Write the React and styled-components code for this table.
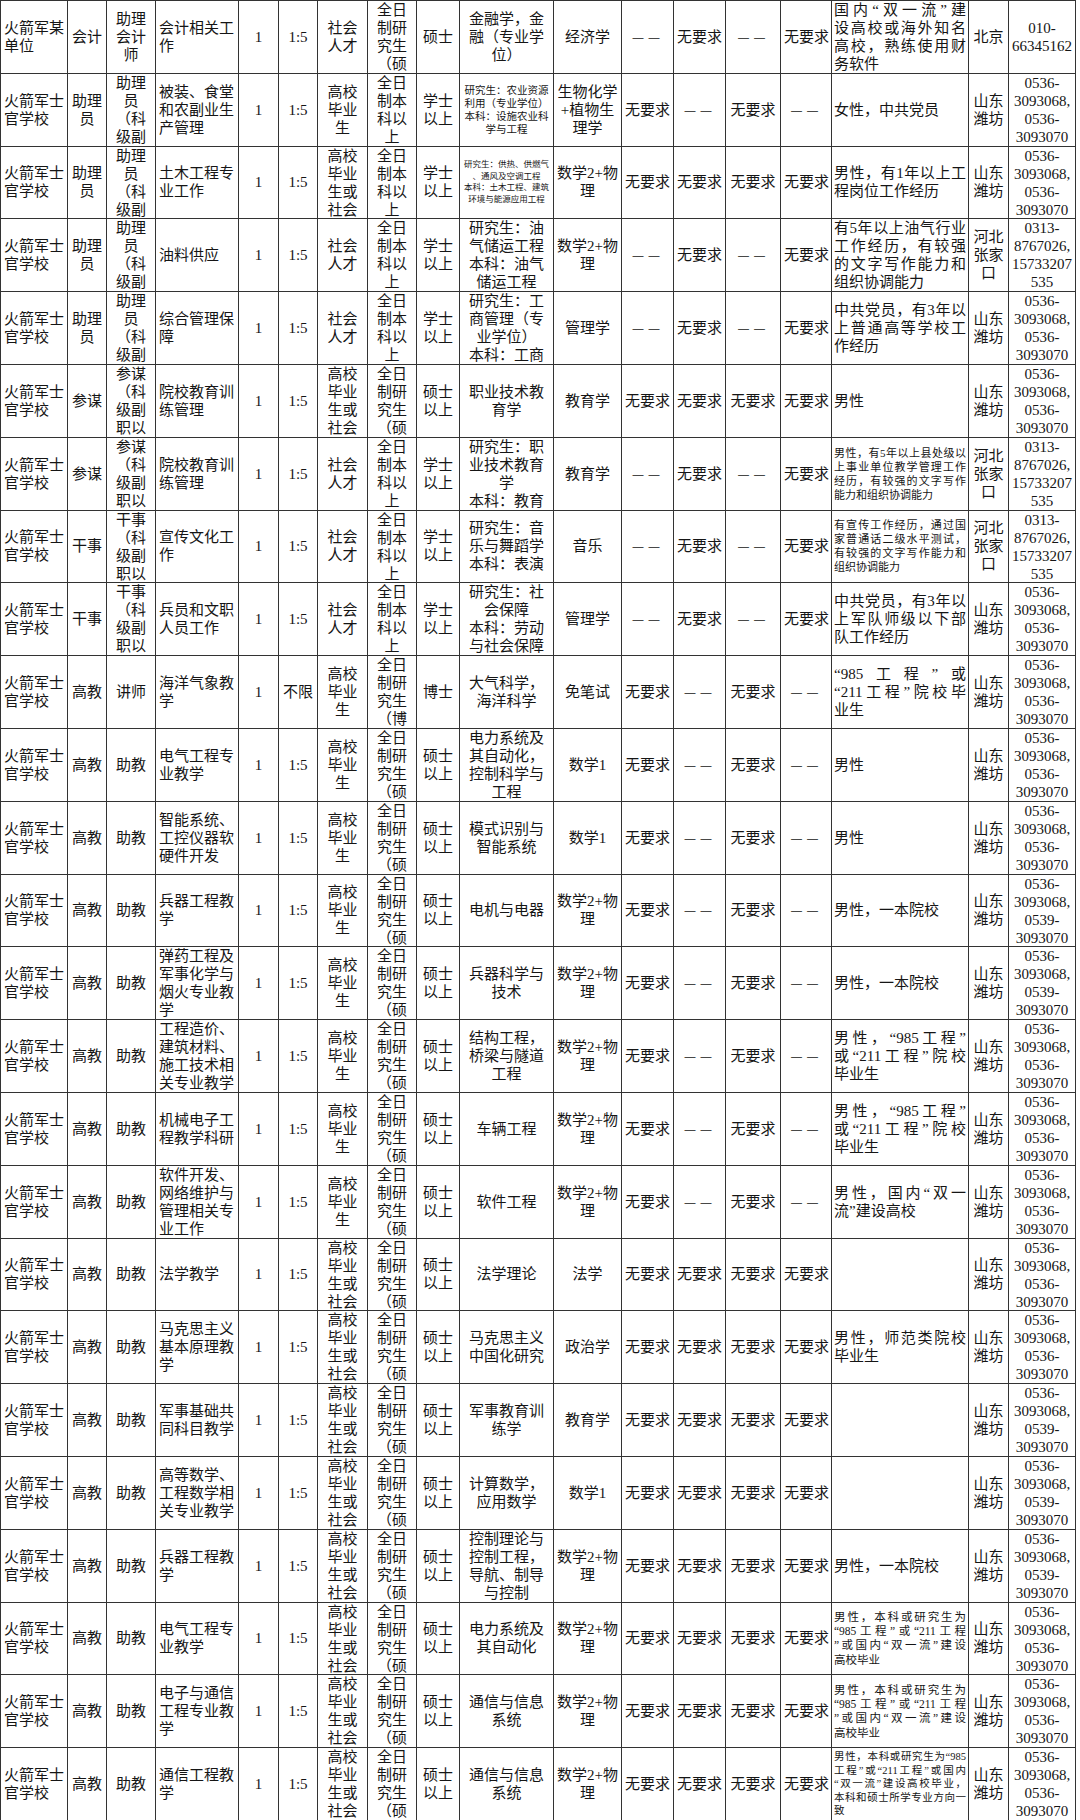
import styled, { createGlobalStyle } from "styled-components";

const GlobalStyle = createGlobalStyle`
  html, body {
    margin: 0;
    padding: 0;
    background: #ffffff;
  }
  body {
    font-family: "Liberation Serif", "Noto Sans CJK SC", serif;
    color: #151515;
  }
`;

const ROW_H = 72.8;

// column widths and alignment, read off the screenshot
const COLS = [
  { w: 67, a: "left" },
  { w: 39, a: "center" },
  { w: 49, a: "center" },
  { w: 83, a: "left" },
  { w: 40, a: "center" },
  { w: 39, a: "center" },
  { w: 50, a: "center" },
  { w: 49, a: "center" },
  { w: 43, a: "center" },
  { w: 94, a: "center" },
  { w: 68, a: "center" },
  { w: 52, a: "center" },
  { w: 52, a: "center" },
  { w: 55, a: "center" },
  { w: 51, a: "center" },
  { w: 137, a: "left", j: true },
  { w: 40, a: "center" },
  { w: 67, a: "center" },
];

const Sheet = styled.div`
  display: grid;
  grid-template-columns: ${COLS.map((c) => c.w + "px").join(" ")};
  grid-auto-rows: ${ROW_H}px;
  width: max-content;
  border-left: 1px solid #333;
  border-top: 1px solid #333;
`;

const Cell = styled.div`
  box-sizing: border-box;
  border-right: 1px solid #333;
  border-bottom: 1px solid #333;
  padding: 0 ${(p) => p.$pad}px;
  display: flex;
  flex-direction: column;
  justify-content: safe center;
  overflow: hidden;
  white-space: nowrap;
  text-align: ${(p) => p.$align};
  font-size: ${(p) => p.$fs}px;
  line-height: ${(p) => p.$lh}px;
  ${(p) =>
    p.$dash &&
    `
    font-family: "Liberation Sans", sans-serif;
    font-size: 11px;
    letter-spacing: 5px;
    padding-left: 5px;
  `}
`;

const Line = styled.div`
  flex-shrink: 0;
  text-align-last: ${(p) => (p.$justify ? "justify" : "auto")};
  text-justify: inter-character;
`;

const S = "火箭军士\n官学校";
const WF = "山东\n潍坊";
const HB = "河北\n张家\n口";
const G6 = "0536-\n3093068,\n0536-\n3093070";
const G9 = "0536-\n3093068,\n0539-\n3093070";
const ZJK = "0313-\n8767026,\n15733207\n535";
const N = "无要求";
const D = "——";
const YJS = "全日\n制研\n究生\n（硕\n士）";
const BK = "全日\n制本\n科以\n上";
const GX = "高校\n毕业\n生";
const GXS = "高校\n毕业\n生或\n社会\n人才";
const SH = "社会\n人才";
const SS = "硕士\n以上";
const XS = "学士\n以上";
const ZLY = "助理\n员\n（科\n级副\n职以\n下）";
const M2 = "数学2+物\n理";
const REQ_A = [N, D, N, D];
const REQ_N = [N, N, N, N];

const small = (t, fs, lh) => ({ t, fs, lh });

const E985 = small("男性，本科或研究生为\n“985工程”或“211工程\n”或国内“双一流”建设\n高校毕业", 11.5, 14.3);

const teach = (c4, c7, c10, c11, req, c16, c18) => [
  S, "高教", "助教", c4, "1", "1:5", c7, YJS, SS, c10, c11, ...req, c16, WF, c18,
];

const ROWS = [
  ["火箭军某\n单位", "会计", "助理\n会计\n师", "会计相关工\n作", "1", "1:5", SH, YJS, "硕士",
    "金融学，金\n融（专业学\n位）", "经济学", D, N, D, N,
    "国内“双一流”建\n设高校或海外知名\n高校，熟练使用财\n务软件", "北京", "010-\n66345162"],
  [S, "助理\n员", ZLY, "被装、食堂\n和农副业生\n产管理", "1", "1:5", GX, BK, XS,
    small("研究生：农业资源\n利用（专业学位）\n本科：设施农业科\n学与工程", 10.5, 13),
    "生物化学\n+植物生\n理学", N, D, N, D, "女性，中共党员", WF, G6],
  [S, "助理\n员", ZLY, "土木工程专\n业工作", "1", "1:5", GXS, BK, XS,
    small("研究生：供热、供燃气\n、通风及空调工程\n本科：土木工程、建筑\n环境与能源应用工程", 8.5, 11.7),
    M2, N, N, N, N, "男性，有1年以上工\n程岗位工作经历", WF, G6],
  [S, "助理\n员", ZLY, "油料供应", "1", "1:5", SH, BK, XS,
    "研究生：油\n气储运工程\n本科：油气\n储运工程", M2, D, N, D, N,
    "有5年以上油气行业\n工作经历，有较强\n的文字写作能力和\n组织协调能力", HB, ZJK],
  [S, "助理\n员", ZLY, "综合管理保\n障", "1", "1:5", SH, BK, XS,
    "研究生：工\n商管理（专\n业学位）\n本科：工商\n管理", "管理学", D, N, D, N,
    "中共党员，有3年以\n上普通高等学校工\n作经历", WF, G6],
  [S, "参谋", "参谋\n（科\n级副\n职以\n下）", "院校教育训\n练管理", "1", "1:5", GXS, YJS, SS,
    "职业技术教\n育学", "教育学", N, N, N, N, "男性", WF, G6],
  [S, "参谋", "参谋\n（科\n级副\n职以\n下）", "院校教育训\n练管理", "1", "1:5", SH, BK, XS,
    "研究生：职\n业技术教育\n学\n本科：教育\n学", "教育学", D, N, D, N,
    small("男性，有5年以上县处级以\n上事业单位教学管理工作\n经历，有较强的文字写作\n能力和组织协调能力", 11, 14), HB, ZJK],
  [S, "干事", "干事\n（科\n级副\n职以\n下）", "宣传文化工\n作", "1", "1:5", SH, BK, XS,
    "研究生：音\n乐与舞蹈学\n本科：表演", "音乐", D, N, D, N,
    small("有宣传工作经历，通过国\n家普通话二级水平测试，\n有较强的文字写作能力和\n组织协调能力", 11, 14), HB, ZJK],
  [S, "干事", "干事\n（科\n级副\n职以\n下）", "兵员和文职\n人员工作", "1", "1:5", SH, BK, XS,
    "研究生：社\n会保障\n本科：劳动\n与社会保障", "管理学", D, N, D, N,
    "中共党员，有3年以\n上军队师级以下部\n队工作经历", WF, G6],
  [S, "高教", "讲师", "海洋气象教\n学", "1", "不限", GX, "全日\n制研\n究生\n（博\n士）", "博士",
    "大气科学，\n海洋科学", "免笔试", N, D, N, D,
    "“985工程”或\n“211工程”院校毕\n业生", WF, G6],
  teach("电气工程专\n业教学", GX, "电力系统及\n其自动化，\n控制科学与\n工程", "数学1", REQ_A, "男性", G6),
  teach("智能系统、\n工控仪器软\n硬件开发", GX, "模式识别与\n智能系统", "数学1", REQ_A, "男性", G6),
  teach("兵器工程教\n学", GX, "电机与电器", M2, REQ_A, "男性，一本院校", G9),
  teach("弹药工程及\n军事化学与\n烟火专业教\n学", GX, "兵器科学与\n技术", M2, REQ_A, "男性，一本院校", G9),
  teach("工程造价、\n建筑材料、\n施工技术相\n关专业教学", GX, "结构工程，\n桥梁与隧道\n工程", M2, REQ_A,
    "男性，“985工程”\n或“211工程”院校\n毕业生", G6),
  teach("机械电子工\n程教学科研", GX, "车辆工程", M2, REQ_A, "男性，“985工程”\n或“211工程”院校\n毕业生", G6),
  teach("软件开发、\n网络维护与\n管理相关专\n业工作", GX, "软件工程", M2, REQ_A, "男性，国内“双一\n流”建设高校", G6),
  teach("法学教学", GXS, "法学理论", "法学", REQ_N, "", G6),
  teach("马克思主义\n基本原理教\n学", GXS, "马克思主义\n中国化研究", "政治学", REQ_N, "男性，师范类院校\n毕业生", G6),
  teach("军事基础共\n同科目教学", GXS, "军事教育训\n练学", "教育学", REQ_N, "", G9),
  teach("高等数学、\n工程数学相\n关专业教学", GXS, "计算数学，\n应用数学", "数学1", REQ_N, "", G9),
  teach("兵器工程教\n学", GXS, "控制理论与\n控制工程，\n导航、制导\n与控制", M2, REQ_N, "男性，一本院校", G9),
  teach("电气工程专\n业教学", GXS, "电力系统及\n其自动化", M2, REQ_N, E985, G6),
  teach("电子与通信\n工程专业教\n学", GXS, "通信与信息\n系统", M2, REQ_N, E985, G6),
  teach("通信工程教\n学", GXS, "通信与信息\n系统", M2, REQ_N,
    small("男性，本科或研究生为“985\n工程”或“211工程”或国内\n“双一流”建设高校毕业，\n本科和硕士所学专业方向一\n致", 10.5, 13.5), G6),
];

const SheetCell = ({ value, col }) => {
  const item = typeof value === "string" ? { t: value } : value;
  const lh = item.lh || 18;
  // like the spreadsheet, a cell only shows the lines that fit in its height
  const fit = Math.ceil((ROW_H - 2) / lh);
  const all = item.t ? item.t.split("\n") : [];
  const lines = all.slice(0, fit);
  return (
    <Cell
      $align={col.a}
      $fs={item.fs || 15}
      $lh={lh}
      $pad={col.j ? 2 : 3}
      $dash={item.t === D}
      title={item.t ? item.t.replace(/\n/g, "") : undefined}
    >
      {lines.map((l, i) => (
        <Line key={i} $justify={col.j && i < all.length - 1}>
          {l}
        </Line>
      ))}
    </Cell>
  );
};

const App = () => (
  <>
    <GlobalStyle />
    <Sheet>
      {ROWS.map((row, r) =>
        row.map((v, c) => <SheetCell key={r + "-" + c} value={v} col={COLS[c]} />)
      )}
    </Sheet>
  </>
);

export default App;
